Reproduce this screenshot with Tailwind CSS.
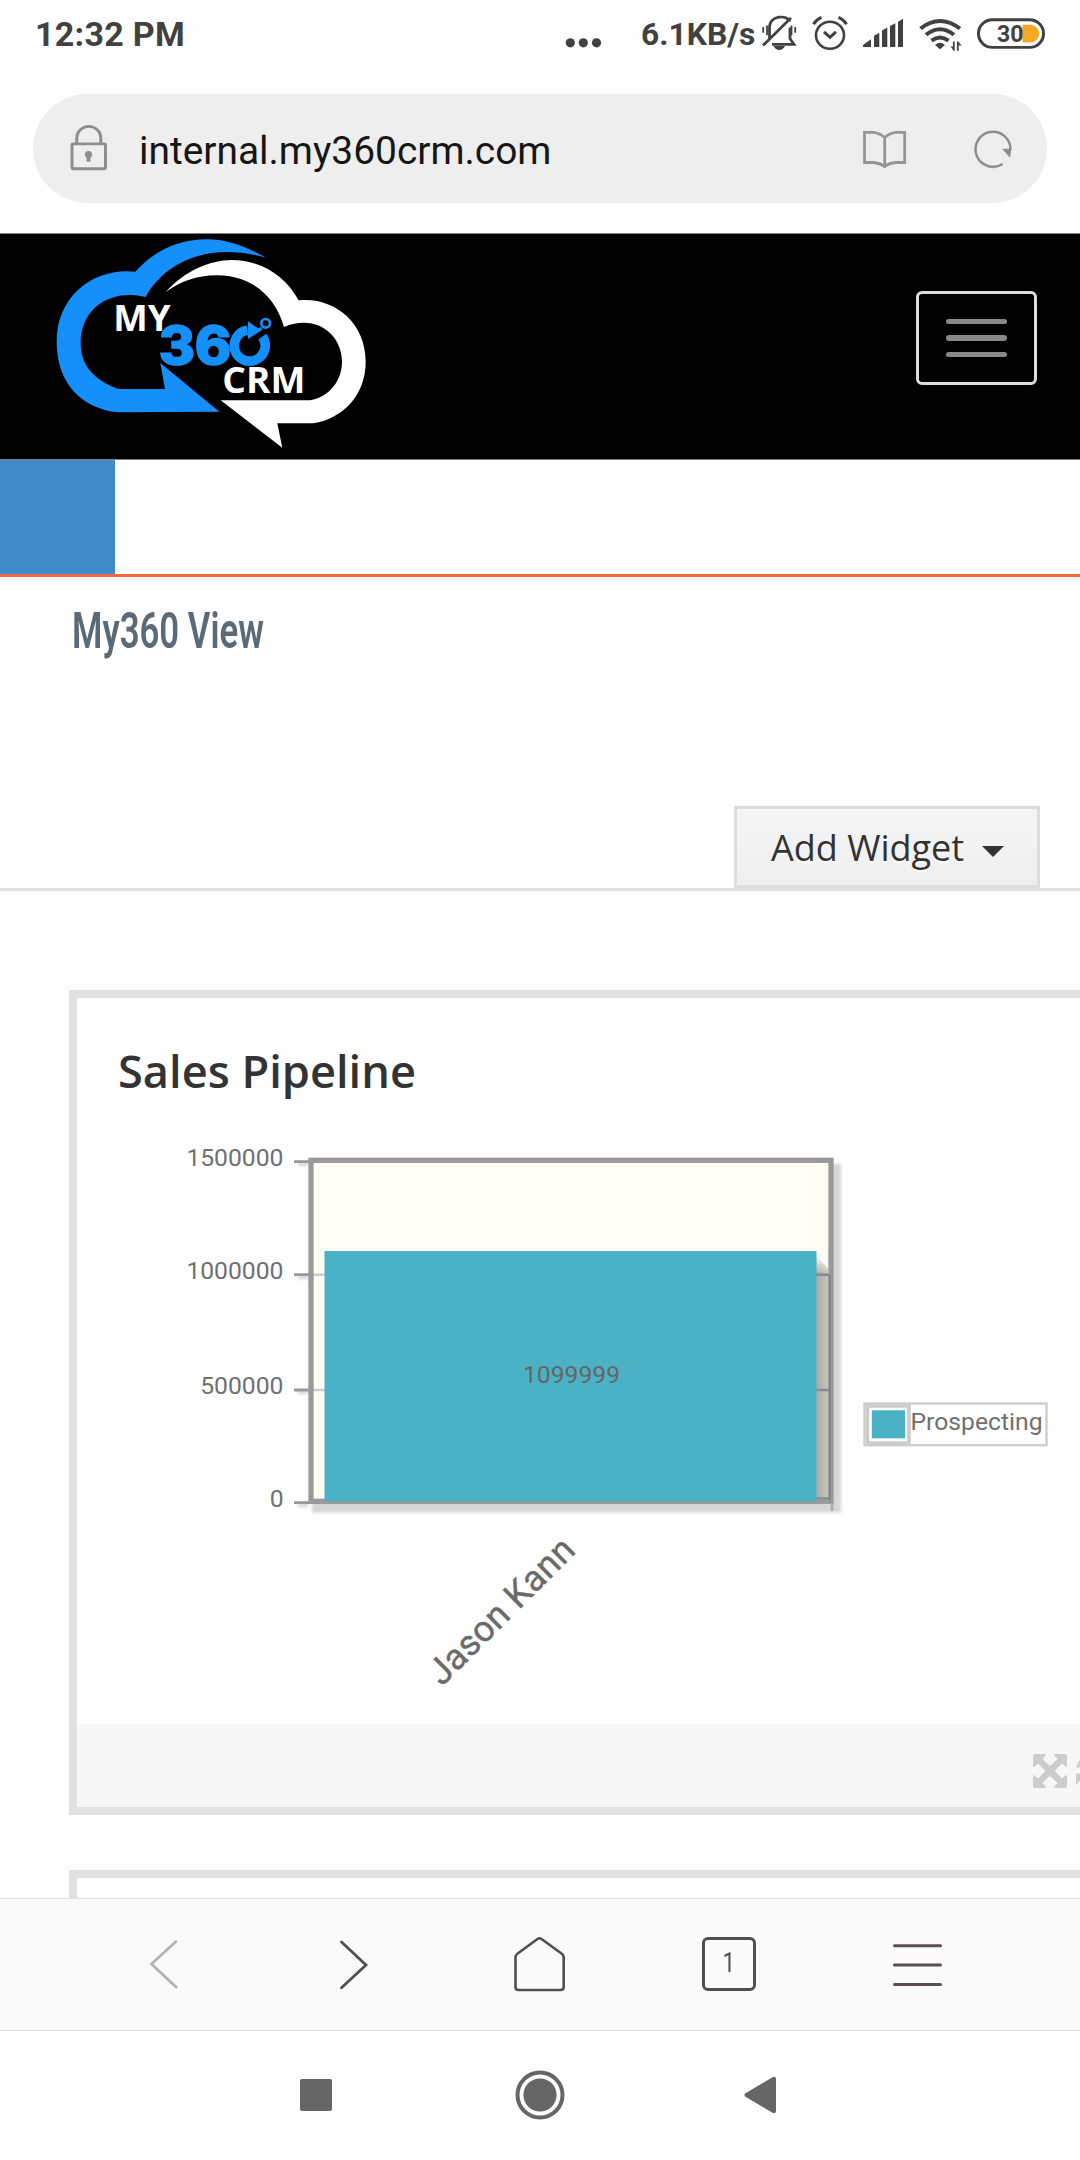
<!DOCTYPE html>
<html lang="en">
<head>
<meta charset="utf-8">
<title>My360 View</title>
<script src="https://cdn.jsdelivr.net/npm/@tailwindcss/browser@4"></script>
</head>
<body class="bg-white">
<div class="flex h-[2160px] w-[1080px] flex-col overflow-hidden bg-[#fefefe] font-['Roboto',sans-serif]">

  <!-- Status bar -->
  <div class="flex h-[70px] items-start pl-[35px] text-[#414141]">
    <span class="mt-[14px] w-[530px] whitespace-nowrap text-[34px] leading-[40px] font-bold tracking-[0.3px]">12:32 PM</span>
    <svg class="mt-[36.500px] h-3 w-[37px]" viewBox="565 38 37 12" fill="currentColor"><circle cx="570.3" cy="43.8" r="4.6"/><circle cx="583.3" cy="43.8" r="4.6"/><circle cx="596.5" cy="43.8" r="4.6"/></svg>
    <span class="mt-[14px] ml-[39px] w-[119px] whitespace-nowrap text-[31.800px] leading-[40px] font-bold">6.1KB/s</span>
    <svg class="mt-[13.500px] h-[38.700px] w-[320px]" viewBox="760 14 320 40" preserveAspectRatio="none" fill="none" stroke="currentColor" stroke-width="2.6">
      <!-- muted bell -->
      <path d="M769.5 39V28C769.5 15 788 14.5 789.5 22M772 45.5H794L790 39.5V28M763 46.500L791 18" stroke-width="2.800"/>
      <path d="M763.200 27.500v6M767 26v10M791.500 26v10M795.200 27.500v6" stroke-width="1.800"/>
      <path d="M773.500 47.200h11.500q-2 4-5.700 4t-5.800-4z" fill="currentColor" stroke="none"/>
      <!-- alarm -->
      <circle cx="830" cy="36" r="14"/><path d="M824 32.500l6 5.500 6-5.500M813.500 24.500q3-5 8-7M846.500 24.500q-3-5-8-7" stroke-width="3"/>
      <!-- signal -->
      <path d="M863 48v-2l8-6v8zM874 48V36.500l5.300-3V48zM882 48V31l5.300-3V48zM890 48V26.500l5.300-3V48zM898 48V22l5-3V48z" fill="currentColor" stroke="none"/>
      <!-- wifi -->
      <path d="M920.500 29Q940 13.500 960 29M926 35.500Q940 24 954 35.500" stroke-width="4"/><path d="M931.500 41.500Q940 35 948.500 41.500" stroke-width="4"/><path d="M935 46q5-4.500 10 0l-5 4.500z" fill="currentColor" stroke="none"/>
      <path d="M953.800 52V42.500M957.800 42.500V52" stroke-width="1.800"/><path d="M950.500 47.500h3v4zM961.500 46.500h-3v-4z" fill="currentColor" stroke="none"/>
      <!-- battery -->
      <rect x="978.500" y="20" width="65" height="28.500" rx="14" stroke-width="3"/>
      <path d="M1022.500 25h7.500a9 9 0 0 1 0 18.500h-7.500z" fill="#f7a723" stroke="none"/>
      <text x="997" y="43.300" font-size="25" font-weight="700" fill="currentColor" stroke="none" textLength="26.500" lengthAdjust="spacingAndGlyphs">30</text>
    </svg>
  </div>

  <!-- Address bar -->
  <div class="mt-[24px] ml-[33px] flex h-[109px] w-[1014px] items-center rounded-full bg-[#eeeeee]">
    <svg class="ml-9 h-[48.400px] w-10" viewBox="69 129 40 50" preserveAspectRatio="none" fill="none" stroke="#8e8e8e" stroke-width="3"><rect x="72" y="149.500" width="33.500" height="25.700" rx="1"/><path d="M76.800 149v-5.500a12 12 0 0 1 24 0v5.500"/><circle cx="88.500" cy="160.500" r="3.600" fill="#8e8e8e" stroke="none"/><path d="M88.500 161v7" stroke-width="4"/></svg>
    <span class="mt-[4px] ml-[30px] w-[722px] whitespace-nowrap text-[38.900px] leading-[52px] text-[#161616]">internal.my360crm.com</span>
    <svg class="h-[42px] w-[46px]" viewBox="861 133 46 42" fill="none" stroke="#959595" stroke-width="2.800"><path d="M864.500 137.300h9Q880 138 884.700 142.500Q889.500 138 896 137.300h8.700V167.500H896Q889 168 884.700 171.500Q880 168 873.500 167.500h-9zM884.700 142.500V173"/></svg>
    <svg class="ml-[65px] h-[42px] w-[44px]" viewBox="972 133 44 42" fill="none" stroke="#8e8e8e" stroke-width="2.500"><path d="M1002.500 169A17.500 17.500 0 1 1 1010.500 154.500"/><path d="M1002 153.700h9.500l-1.500 9z" fill="#8e8e8e" stroke="none"/></svg>
  </div>

  <!-- Site header -->
  <header class="mt-[30px] flex h-[227px] items-start border-y border-[#808080] bg-black">
    <svg class="ml-[30px] h-[225px] w-[360px]" viewBox="0 27 1080 675" font-family="'Open Sans',sans-serif">
      <path fill="#1590fb" d="M708 98C640 60 580 42 530 43C440 44 370 80 316 140C200 126 80 205 80 350C80 480 160 550 262 562L568 560L391 414L405 492H265C190 465 152 420 152 355C152 250 240 190 347 216C395 125 520 45 708 98Z"/>
      <path fill="#fff" d="M408 201C460 140 540 105 605 105C690 105 765 150 806 226C910 215 1007 290 1007 410C1007 510 940 580 850 595H742L757 668L572 526H840C900 515 936 465 936 410C936 330 860 265 762 306C735 210 660 150 560 151C500 151 450 170 408 201Z"/>
      <text x="250" y="318" font-size="109" font-weight="700" fill="#fff" textLength="172" lengthAdjust="spacingAndGlyphs">MY</text>
      <text x="577" y="504" font-size="107" font-weight="700" fill="#fff" textLength="249" lengthAdjust="spacingAndGlyphs">CRM</text>
      <text x="386" y="418" font-family="Inter,sans-serif" font-size="156" font-weight="800" fill="#1590fb" stroke="#1590fb" stroke-width="5" textLength="218" lengthAdjust="spacingAndGlyphs">36</text>
      <circle cx="659" cy="362" r="60" fill="#000"/>
      <path d="M652 316A46.500 46.500 0 1 0 697 335" fill="none" stroke="#1590fb" stroke-width="29"/>
      <path d="M648 346L704 312" stroke="#000" stroke-width="10"/>
      <path d="M654 289L684 310L694 306L697 314L654 342Z" fill="#1590fb"/>
      <circle cx="707" cy="295" r="13" fill="#000" stroke="#1590fb" stroke-width="8"/>
    </svg>
    <button class="mt-[57px] ml-[526px] flex h-[94px] w-[121px] flex-col items-center justify-center gap-[11px] rounded-[6px] border-[3px] border-[#dddddd]">
      <span class="h-[5.500px] w-[61px] rounded-full bg-[#888888]"></span>
      <span class="h-[5.500px] w-[61px] rounded-full bg-[#888888]"></span>
      <span class="h-[5.500px] w-[61px] rounded-full bg-[#888888]"></span>
    </button>
  </header>

  <div class="h-[117px] border-b-[3px] border-[#f2693a]"><div class="h-[114px] w-[115px] bg-[#428bca]"></div></div>

  <h1 class="mt-[24px] ml-[72px] h-[60px] w-max origin-left scale-x-[0.695] text-[50px] leading-[60px] font-semibold whitespace-nowrap text-[#5b6a77]">My360 View</h1>

  <!-- Toolbar -->
  <div class="mt-[144.500px] flex h-[85.500px] justify-end border-b-[3px] border-[#e0e0e0] pr-10 font-['Open_Sans',sans-serif]">
    <button class="flex h-[82.500px] w-[306px] items-center border-[3px] border-[#dddddd] bg-linear-to-b from-[#f5f5f5] to-[#efefef] pl-[34px] text-[36px] leading-[50px] text-[#333] [text-shadow:0_2px_0_#fff]">
      <span class="mt-[2px] w-[211px] text-left whitespace-nowrap">Add Widget</span>
      <svg class="mt-[10px] h-[11px] w-[22px]" viewBox="0 0 22 11"><path d="M0 0h22L11 11z" fill="#333"/></svg>
    </button>
  </div>

  <!-- Sales pipeline widget -->
  <section class="mt-[99px] ml-[69px] h-[825px] w-[1100px] shrink-0 border-8 border-[#e1e1e3] bg-[#fefefe]">
    <h2 class="h-[112px] pt-[43px] pl-[41px] font-['Open_Sans',sans-serif] text-[45.200px] leading-[60px] font-semibold text-[#333]">Sales Pipeline</h2>
    <svg class="h-[614px] w-[1003px]" viewBox="77 1110 1003 614" font-family="Roboto,sans-serif" fill="#707070" font-size="24.700">
      <defs>
        <filter id="soft" x="-10%" y="-10%" width="120%" height="120%"><feGaussianBlur stdDeviation="1.800"/></filter>
        <linearGradient id="barShade"><stop offset="0" stop-color="#aaa9a3"/><stop offset="1" stop-color="#c6c4bb"/></linearGradient>
        <linearGradient id="shadeTop" x1="0" y1="0" x2="0" y2="1"><stop offset="0" stop-color="#fffdf6"/><stop offset="1" stop-color="#fffdf6" stop-opacity="0"/></linearGradient>
      </defs>
      <path d="M312 1502H831V1164H841V1512.500H312zM298 1162h10v4h-10zM298 1275h10v4h-10zM298 1390h10v4h-10zM298 1503h10v4h-10z" fill="#d6d6d6" filter="url(#soft)"/>
      <rect x="311" y="1160.300" width="520" height="341" fill="#fffdf6"/>
      <path d="M313 1274.700h516M313 1390h516" stroke="#ccc" stroke-width="2.500"/>
      <path d="M816 1256l12 12v231h-12z" fill="url(#barShade)"/>
      <rect x="816" y="1254" width="12.500" height="20" fill="url(#shadeTop)"/>
      <path d="M816 1274.700h13M816 1390h13M816 1498.500h13" stroke="#8a8a8a" stroke-width="2.500"/>
      <rect x="311" y="1160.300" width="520" height="341" fill="none" stroke="#999" stroke-width="5.300"/>
      <path d="M829.500 1275V1500" stroke="#7e7e7e" stroke-width="2"/>
      <path d="M832 1503v8" stroke="#aaa" stroke-width="2.500"/>
      <path d="M294 1161.700h15M294 1274.700h15M294 1390h15M294 1502.700h15" stroke="#999" stroke-width="2.800"/>
      <rect x="324.500" y="1251" width="492" height="250.300" fill="#4bb2c5"/>
      <g text-anchor="end"><text x="283.500" y="1166.300">1500000</text><text x="283.500" y="1279">1000000</text><text x="283.500" y="1393.500">500000</text><text x="283.500" y="1506.800">0</text></g>
      <text x="571.500" y="1383.300" text-anchor="middle" fill="#666">1099999</text>
      <text transform="translate(442 1687) rotate(-45)" font-size="36" textLength="191" fill="#6a6a6a" stroke="#6a6a6a" stroke-width=".4">Jason Kann</text>
      <rect x="864.500" y="1403.500" width="182" height="41.700" fill="#fff" stroke="#ccc" stroke-width="2.300"/>
      <rect x="867.500" y="1406" width="41.500" height="37" fill="#fff" stroke="#ccc" stroke-width="3.500"/>
      <rect x="871.800" y="1410.300" width="33.200" height="28" fill="#4bb2c5"/>
      <text x="910.500" y="1430" textLength="132">Prospecting</text>
    </svg>
    <div class="h-[83px] bg-[#f7f7f7] pt-[30px] pl-[956px]">
      <svg class="h-[34px] w-[50px]" viewBox="0 0 50 34" fill="#cccccc"><path d="M1.500 0H12L13 1L9.500 5L17 12.200L24.500 5L21 1L22 0H32.500L34 1.500V12L33 13L29 9.500L21.800 17L29 24.500L33 21L34 22V32.500L32.500 34H22L21 33L24.500 29L17 21.800L9.500 29L13 33L12 34H1.500L0 32.500V22L1 21L5 24.500L12.200 17L5 9.500L1 13L0 12V1.500z"/><path d="M43 13.500Q44.500 8 49 4V13.500zM43 19.500H50V28.500L47 26.500L43 31z"/></svg>
    </div>
  </section>

  <section class="mt-[55px] ml-[69px] h-[28px] w-[1100px] shrink-0 border-x-8 border-t-8 border-[#e1e1e3]"></section>

  <!-- Browser toolbar -->
  <nav class="flex h-[133px] shrink-0 items-center border-y border-[#dfdfdf] bg-[#fafafa] text-[#505050]">
    <svg class="ml-[136px] h-[60px] w-14" viewBox="136 1935 56 60" fill="none" stroke="#b3b3b3" stroke-width="2.800" stroke-linecap="round"><path d="M176 1941.500L151.500 1964L176 1987"/></svg>
    <svg class="ml-[134px] h-[60px] w-14" viewBox="326 1935 56 60" fill="none" stroke="currentColor" stroke-width="2.800" stroke-linecap="round"><path d="M341.500 1942L366 1965L341.500 1987.700"/></svg>
    <svg class="ml-[130px] h-[60px] w-14" viewBox="512 1935 56 60" fill="none" stroke="currentColor" stroke-width="2.600"><path d="M537.500 1939Q539.500 1937.500 541.500 1939L561.500 1953.500Q563.700 1955 563.700 1957.500V1987Q563.700 1990 560.700 1990H518.500Q515.500 1990 515.500 1987V1957.500Q515.500 1955 517.700 1953.500z"/></svg>
    <div class="-mt-[1px] ml-[134px] flex h-[54px] w-[54px] items-center justify-center rounded-[6px] border-[3px] border-current pb-[3px] text-[28px]"><span class="scale-x-[0.8]">1</span></div>
    <svg class="ml-[134px] h-[60px] w-14" viewBox="890 1935 56 60" fill="none" stroke="#5b5050" stroke-width="3" stroke-linecap="round"><path d="M894.500 1945.700h46M894.500 1965h46M894.500 1984.500h46"/></svg>
  </nav>

  <!-- System navigation -->
  <nav class="flex h-[128px] items-center pl-[300px] text-[#666666]">
    <div class="size-8 rounded-[2px] bg-current"></div>
    <svg class="ml-[183px] size-[50px]" viewBox="0 0 50 50"><circle cx="25" cy="25" r="22.500" fill="none" stroke="currentColor" stroke-width="4"/><circle cx="25" cy="25" r="16.600" fill="currentColor"/></svg>
    <svg class="ml-[179px] h-[38px] w-8" viewBox="0 0 32 38" fill="currentColor"><path d="M1 17.500L28.500 1.200Q32 0 32 3V35Q32 38 28.500 36.800L1 20.500Q0 19 1 17.500z"/></svg>
  </nav>
</div>
</body>
</html>
